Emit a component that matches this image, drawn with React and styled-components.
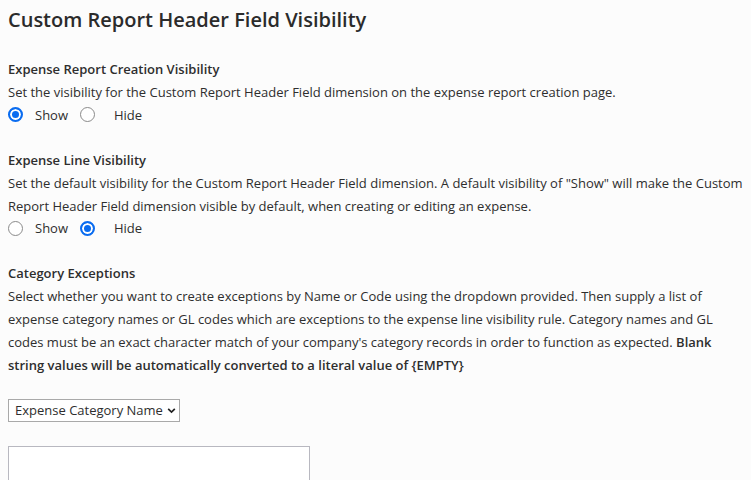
import React, { useState } from 'react';
import styled, { createGlobalStyle } from 'styled-components';

const GlobalStyle = createGlobalStyle`
  body {
    margin: 0;
    background: #fcfcfc;
    font-family: "Open Sans", "Noto Sans", sans-serif;
    color: #2e2e2e;
  }
`;

const Page = styled.div`
  padding: 8px 8px 0 8px;
`;

const Title = styled.h1`
  margin: 0 0 26px 0;
  font-size: 20px;
  line-height: 24px;
  font-weight: 600;
  color: #2b2b2b;
`;

const Section = styled.section`
  margin-bottom: ${(p) => p.gap ?? 23}px;
`;

const Heading = styled.h2`
  margin: 0;
  font-size: 13px;
  line-height: 23px;
  font-weight: 600;
`;

const Text = styled.p`
  margin: 0;
  font-size: 13px;
  line-height: 22.8px;
  b {
    font-weight: 600;
  }
`;

const RadioRow = styled.div`
  display: flex;
  align-items: center;
  height: 22px;
  font-size: 13px;
`;

const RadioLabel = styled.label`
  display: flex;
  align-items: center;
  margin-right: ${(p) => p.spacing || 0}px;
`;

const Radio = styled.input.attrs({ type: 'radio' })`
  appearance: none;
  margin: 0 ${(p) => p.$gap || 12}px 0 0;
  width: 15px;
  height: 15px;
  border-radius: 50%;
  border: 1px solid #8a8a8a;
  background: #fff;
  box-sizing: border-box;
  &:checked {
    border: 2px solid #0a6cf0;
    box-shadow: inset 0 0 0 2px #fff;
    background: #0a6cf0;
  }
`;

const Select = styled.select`
  display: block;
  margin: 22px 0 24px 0;
  height: 23px;
  width: 172px;
  padding: 0 0 0 6px;
  font-family: "Open Sans", "Noto Sans", sans-serif;
  font-size: 13px;
  color: #2e2e2e;
  border: 1px solid #a9a9a9;
  border-radius: 0;
  background: #fff;
  appearance: none;
  background-image: url("data:image/svg+xml;utf8,<svg xmlns='http://www.w3.org/2000/svg' width='9' height='7' viewBox='0 0 9 7'><path d='M1.2 1.8 L4.5 5 L7.8 1.8' fill='none' stroke='%23222' stroke-width='1.7'/></svg>");
  background-repeat: no-repeat;
  background-position: right 3px center;
`;

const TextArea = styled.textarea`
  display: block;
  width: 302px;
  height: 60px;
  box-sizing: border-box;
  border: 1px solid #b8b8c0;
  background: #fff;
  resize: none;
  margin: 0;
`;

const VisibilityRadios = ({ name, value, onChange }) => (
  <RadioRow>
    <RadioLabel spacing={12}>
      <Radio name={name} checked={value === 'show'} onChange={() => onChange('show')} />
      Show
    </RadioLabel>
    <RadioLabel>
      <Radio name={name} $gap={19} checked={value === 'hide'} onChange={() => onChange('hide')} />
      Hide
    </RadioLabel>
  </RadioRow>
);

const App = () => {
  const [creation, setCreation] = useState('show');
  const [line, setLine] = useState('hide');

  return (
    <>
      <GlobalStyle />
      <Page>
        <Title>Custom Report Header Field Visibility</Title>

        <Section>
          <Heading>Expense Report Creation Visibility</Heading>
          <Text>Set the visibility for the Custom Report Header Field dimension on the expense report creation page.</Text>
          <VisibilityRadios name="creation" value={creation} onChange={setCreation} />
        </Section>

        <Section>
          <Heading>Expense Line Visibility</Heading>
          <Text>
            Set the default visibility for the Custom Report Header Field dimension. A default visibility of "Show" will make the Custom Report Header Field dimension visible by default, when creating or editing an expense.
          </Text>
          <VisibilityRadios name="line" value={line} onChange={setLine} />
        </Section>

        <Section gap={0}>
          <Heading>Category Exceptions</Heading>
          <Text>
            Select whether you want to create exceptions by Name or Code using the dropdown provided. Then supply a list of expense category names or GL codes which are exceptions to the expense line visibility rule. Category names and GL codes must be an exact character match of your company's category records in order to function as expected. <b>Blank string values will be automatically converted to a literal value of {'{EMPTY}'}</b>
          </Text>
        </Section>

        <Select defaultValue="name">
          <option value="name">Expense Category Name</option>
          <option value="code">GL Code</option>
        </Select>

        <TextArea />
      </Page>
    </>
  );
};

export default App;
